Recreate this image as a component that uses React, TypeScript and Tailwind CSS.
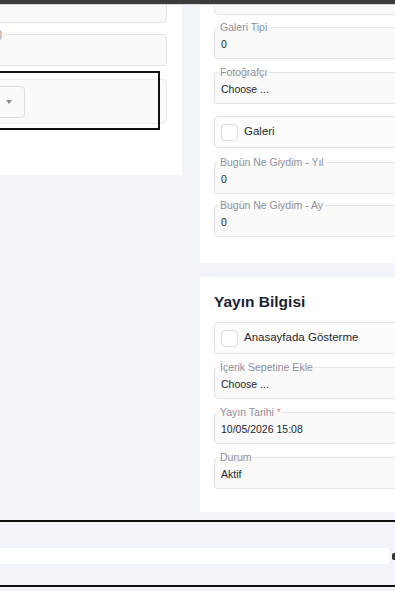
import React from 'react';

const Field: React.FC<{ label?: React.ReactNode; value: string }> = ({ label, value }) => (
  <fieldset className="rounded-[4px] border border-[#e3e3e6] bg-[#fafafa] pl-[3px] pb-[6px]">
    <legend className="px-[2px] text-[10.5px] leading-[14px] text-[#8d8f9a]">{label}</legend>
    <div className="pl-[3px] pt-[2px] text-[10.5px] leading-[16px] text-[#23252b]">{value || '\u00a0'}</div>
  </fieldset>
);

const Check: React.FC<{ label: string; className?: string }> = ({ label, className }) => (
  <div className={`flex h-[32px] items-center gap-[6px] rounded-[4px] border border-[#e3e3e6] bg-[#fcfcfc] pl-[6px] ${className ?? ''}`}>
    <span className="h-[17px] w-[17px] rounded-[4px] border border-[#dcdce0] bg-white" />
    <span className="text-[11.5px] text-[#26272d]">{label}</span>
  </div>
);

export default function App() {
  return (
    <div
      className="relative h-[591px] w-[395px] overflow-hidden bg-[#f1f4f9]"
      style={{ fontFamily: '"Liberation Sans", Arial, sans-serif' }}
    >
      <div className="absolute left-0 right-0 top-0 z-10 h-[5px] border-b border-[#d9d9d9] bg-[#3b3b3b]" />

      <div className="-mt-[40px] flex items-start gap-[18px]">
        {/* left column */}
        <div className="w-[182px] shrink-0 overflow-hidden bg-white pb-[51px] pr-[15px] pt-[24px]">
          <div className="-ml-[82px] flex flex-col gap-[4px]">
            <Field label="Başlık" value="" />
            <Field label="Spot (Opsiyonel)" value="" />
            <div className="relative mt-[9px]">
              <div className="flex h-[45px] items-center rounded-[4px] border border-[#ececef] bg-[#fafafa] pl-[6px]">
                <div className="flex h-[32px] w-[100px] items-center justify-end rounded-[4px] border border-[#dcdce0] bg-[#fafafa] pr-[12px]">
                  <span className="h-0 w-0 border-x-[3px] border-t-[4px] border-x-transparent border-t-[#8a8a8a]" />
                </div>
              </div>
              <div className="pointer-events-none absolute -bottom-[6px] -left-[10px] -top-[8px] right-[7px] border-2 border-[#111]" />
            </div>
          </div>
        </div>

        {/* right column */}
        <div className="w-[240px] shrink-0">
          <div className="flex flex-col gap-[5px] bg-white pb-[26px] pl-[14px] pt-[16px]">
            <Field label="Galeri Kategori" value="" />
            <Field label="Galeri Tipi" value="0" />
            <div className="mt-[1px]">
              <Field label="Fotoğrafçı" value="Choose ..." />
            </div>
            <Check label="Galeri" className="mt-[7px]" />
            <div className="mt-[2px]">
              <Field label="Bugün Ne Giydim - Yıl" value="0" />
            </div>
            <div className="-mt-[1px]">
              <Field label="Bugün Ne Giydim - Ay" value="0" />
            </div>
          </div>

          <div className="mt-[14px] flex flex-col gap-[6px] bg-white pb-[23px] pl-[14px] pt-[13px]">
            <h2 className="mb-[2px] text-[15.5px] font-bold leading-[24px] text-[#1d1f33]">Yayın Bilgisi</h2>
            <Check label="Anasayfada Gösterme" />
            <Field label="İçerik Sepetine Ekle" value="Choose ..." />
            <Field
              label={
                <>
                  Yayın Tarihi <span className="text-[#ef8a8a]">*</span>
                </>
              }
              value="10/05/2026 15:08"
            />
            <Field label="Durum" value="Aktif" />
          </div>
        </div>
      </div>

      <div className="mt-[8px] h-[67px] border-y-2 border-[#111] pt-[26px]">
        <div className="flex items-center gap-[3px]">
          <div className="h-[16px] w-[390px] rounded-r-[2px] bg-white" />
          <div className="h-[7px] w-[3px] rounded-l-[2px] bg-[#333]" />
        </div>
      </div>
    </div>
  );
}
